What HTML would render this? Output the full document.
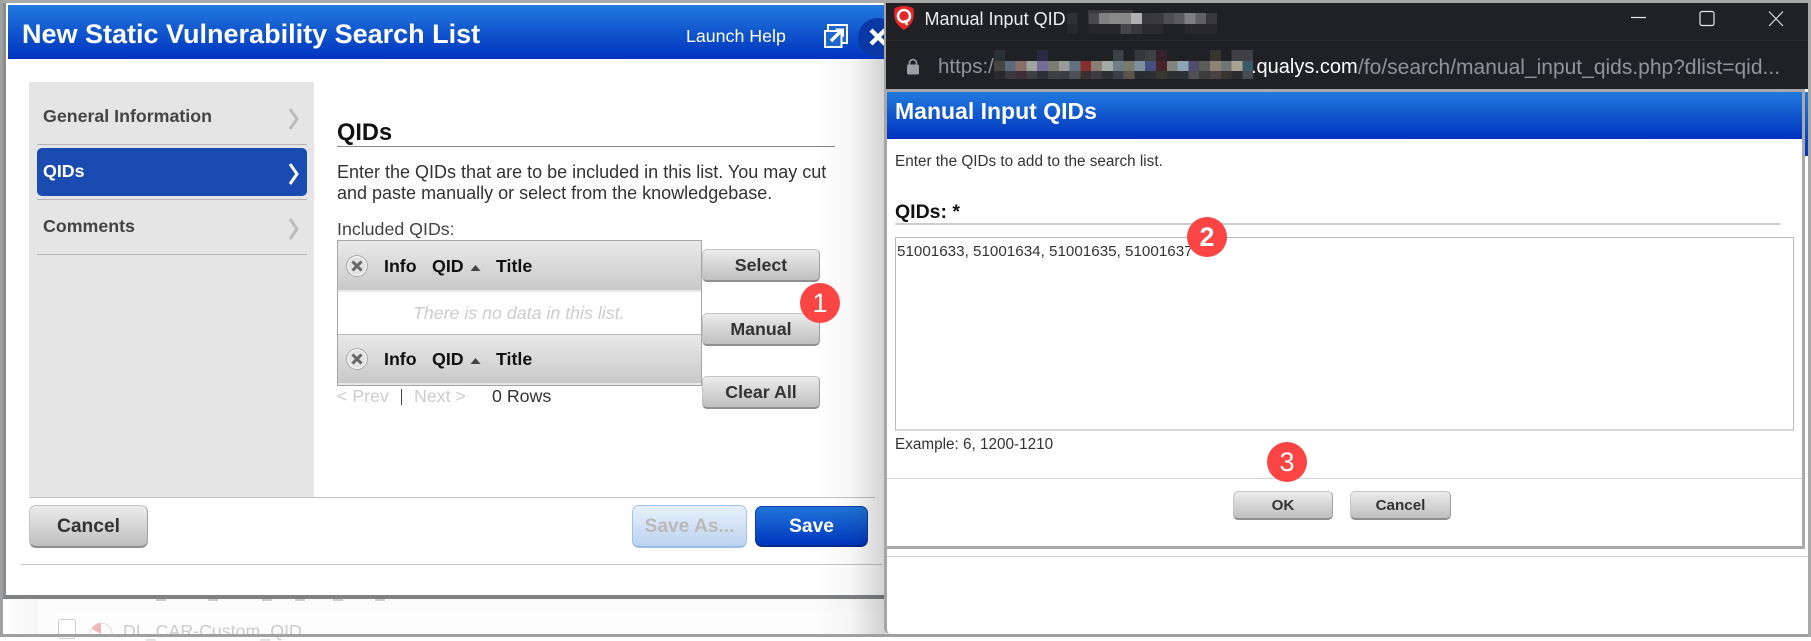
<!DOCTYPE html>
<html><head><meta charset="utf-8"><title>Manual Input QIDs</title>
<style>
html,body{margin:0;padding:0;width:1811px;height:637px;overflow:hidden;background:#fff;font-family:"Liberation Sans",Arial,sans-serif}
div,span{box-sizing:border-box}
.a{position:absolute}
.t{position:absolute;white-space:nowrap;line-height:1}
.b{font-weight:bold}
.btn{position:absolute;background:linear-gradient(#ececec,#bfbfbf);border:1px solid #c4c4c4;border-bottom:2px solid #8f8f8f;border-right-color:#a0a0a0;border-radius:5px;color:#333;font-weight:bold;font-size:17.8px;display:flex;align-items:center;justify-content:center;line-height:1;padding-top:2px}
.thead{position:absolute;left:338px;width:363px;background:linear-gradient(#e9e9e9,#c9c9c9)}
.badge{position:absolute;width:40px;height:40px;border-radius:50%;background:#fb4444;color:#fff;font-size:27px;display:flex;align-items:center;justify-content:center;line-height:1}
</style></head><body>

<!-- back page under modal -->
<div class="a" style="left:0;top:599px;width:886px;height:38px;background:#fbfbfb"></div>
<div class="a" style="left:3px;top:599px;width:35px;height:38px;background:linear-gradient(90deg,#fff,#f6f6f6)"></div>
<div class="a" style="left:53px;top:609px;width:833px;height:28px;background:#fdfdfd"></div>
<div class="a" style="left:58px;top:619px;width:18px;height:20px;border:1px solid #ccc;border-radius:3px;background:#fff"></div>
<svg class="a" style="left:88px;top:621px" width="26" height="16"><circle cx="13" cy="13" r="11" fill="#fff" stroke="#ddd"/><path d="M13 13V2A11 11 0 0 0 4 8Z" fill="#f5b4b4"/></svg>
<div class="t" style="left:123px;top:623px;font-size:17.8px;color:#ccc">DL_CAR-Custom_QID</div>
<div class="a" style="left:156px;top:599px;width:10px;height:2px;background:#ccc"></div>
<div class="a" style="left:208px;top:599px;width:10px;height:2px;background:#ccc"></div>
<div class="a" style="left:262px;top:599px;width:10px;height:2px;background:#ccc"></div>
<div class="a" style="left:295px;top:599px;width:10px;height:2px;background:#ccc"></div>
<div class="a" style="left:333px;top:599px;width:10px;height:2px;background:#ccc"></div>
<div class="a" style="left:375px;top:599px;width:10px;height:2px;background:#ccc"></div>

<!-- modal -->
<div class="a" style="left:3px;top:3px;width:883px;height:596px;background:#fff;border-left:3px solid #8a8d90;border-bottom:4px solid #7f8285"></div>
<div class="a" style="left:8px;top:5px;width:878px;height:54px;background:linear-gradient(#2279dd,#0033bf)"></div>
<div class="t b" style="left:22px;top:21px;font-size:27px;color:#fff">New Static Vulnerability Search List</div>
<div class="t" style="left:686px;top:28px;font-size:17.8px;color:#fff">Launch Help</div>
<svg class="a" style="left:824px;top:24px" width="24" height="24" viewBox="0 0 24 24"><rect x="4" y="1" width="19" height="18" fill="#1d66cf" stroke="#fff" stroke-width="2"/><rect x="1" y="7" width="16.5" height="16" fill="#1d66cf" stroke="#fff" stroke-width="2"/><path d="M7 17L16 8" stroke="#fff" stroke-width="3.4" fill="none"/><path d="M11 4.5H20V13.5Z" fill="#fff"/></svg>
<div class="a" style="left:858px;top:18px;width:40px;height:39px;border-radius:50%;background:#0a39a6"></div>
<svg class="a" style="left:869px;top:28px" width="18" height="18"><path d="M2 2L16 16M16 2L2 16" stroke="#fff" stroke-width="4.4" fill="none"/></svg>

<!-- sidebar -->
<div class="a" style="left:29px;top:82px;width:285px;height:415px;background:#e5e5e5"></div>
<div class="t b" style="left:43px;top:108px;font-size:17.8px;color:#444">General Information</div>
<div class="a" style="left:37px;top:144px;width:270px;height:1px;background:#b5b5b5"></div>
<div class="a" style="left:37px;top:148px;width:270px;height:48px;background:#1a4bb0;border-radius:5px"></div>
<div class="t b" style="left:43px;top:163px;font-size:17.8px;color:#fff">QIDs</div>
<div class="a" style="left:37px;top:199px;width:270px;height:1px;background:#b5b5b5"></div>
<div class="t b" style="left:43px;top:218px;font-size:17.8px;color:#444">Comments</div>
<div class="a" style="left:37px;top:254px;width:270px;height:1px;background:#b5b5b5"></div>
<svg class="a" style="left:287px;top:107px" width="14" height="24"><path d="M3 2L10 12L3 22" fill="none" stroke="#bcbcbc" stroke-width="3"/></svg>
<svg class="a" style="left:287px;top:162px" width="14" height="24"><path d="M3 2L10 12L3 22" fill="none" stroke="#fff" stroke-width="3"/></svg>
<svg class="a" style="left:287px;top:217px" width="14" height="24"><path d="M3 2L10 12L3 22" fill="none" stroke="#bcbcbc" stroke-width="3"/></svg>

<!-- main -->
<div class="t b" style="left:337px;top:122px;font-size:23.6px;color:#111">QIDs</div>
<div class="a" style="left:337px;top:146px;width:498px;height:1px;background:#888"></div>
<div class="t" style="left:337px;top:163px;font-size:18px;color:#333">Enter the QIDs that are to be included in this list. You may cut</div>
<div class="t" style="left:337px;top:184px;font-size:18px;color:#333">and paste manually or select from the knowledgebase.</div>
<div class="t" style="left:337px;top:221px;font-size:17.8px;color:#444">Included QIDs:</div>

<div class="a" style="left:337px;top:240px;width:365px;height:146px;border:1px solid #a5a5a5;background:#fff"></div>
<div class="thead" style="top:241px;height:49px"></div>
<div class="a" style="left:338px;top:290px;width:363px;height:2px;background:#e8e8e8"></div>
<div class="a" style="left:338px;top:334px;width:363px;height:1px;background:#bdbdbd"></div>
<div class="thead" style="top:335px;height:48px"></div>
<div class="a" style="left:338px;top:383px;width:363px;height:2px;background:#e8e8e8"></div>

<svg class="a" style="left:346px;top:255px" width="22" height="22"><circle cx="11" cy="11" r="9.6" fill="#e2e2e2" stroke="#f6f6f6" stroke-width="1.8"/><circle cx="11" cy="11" r="10.4" fill="none" stroke="#999" stroke-width=".8"/><path d="M6.5 6.5L15.5 15.5M15.5 6.5L6.5 15.5" stroke="#666" stroke-width="3"/></svg>
<div class="t b" style="left:384px;top:258px;font-size:17.8px;color:#111">Info</div>
<div class="t b" style="left:432px;top:258px;font-size:17.8px;color:#111">QID</div>
<svg class="a" style="left:470px;top:265px" width="11" height="6"><path d="M5.5 0L10.5 6H.5Z" fill="#444"/></svg>
<div class="t b" style="left:496px;top:258px;font-size:17.8px;color:#111">Title</div>
<div class="t" style="left:413px;top:305px;font-size:17.8px;font-style:italic;color:#ccc">There is no data in this list.</div>
<svg class="a" style="left:346px;top:348px" width="22" height="22"><circle cx="11" cy="11" r="9.6" fill="#e2e2e2" stroke="#f6f6f6" stroke-width="1.8"/><circle cx="11" cy="11" r="10.4" fill="none" stroke="#999" stroke-width=".8"/><path d="M6.5 6.5L15.5 15.5M15.5 6.5L6.5 15.5" stroke="#666" stroke-width="3"/></svg>
<div class="t b" style="left:384px;top:351px;font-size:17.8px;color:#111">Info</div>
<div class="t b" style="left:432px;top:351px;font-size:17.8px;color:#111">QID</div>
<svg class="a" style="left:470px;top:358px" width="11" height="6"><path d="M5.5 0L10.5 6H.5Z" fill="#444"/></svg>
<div class="t b" style="left:496px;top:351px;font-size:17.8px;color:#111">Title</div>

<div class="t" style="left:337px;top:388px;font-size:17.8px;color:#ccc">&lt; Prev</div>
<div class="a" style="left:401px;top:389px;width:1px;height:16px;background:#444"></div>
<div class="t" style="left:414px;top:388px;font-size:17.8px;color:#ccc">Next &gt;</div>
<div class="t" style="left:492px;top:388px;font-size:17.8px;color:#333">0 Rows</div>

<div class="btn" style="left:702px;top:249px;width:118px;height:33px">Select</div>
<div class="btn" style="left:702px;top:313px;width:118px;height:33px">Manual</div>
<div class="btn" style="left:702px;top:376px;width:118px;height:33px">Clear All</div>

<!-- footer -->
<div class="a" style="left:29px;top:497px;width:846px;height:1px;background:#c4c4c4"></div>
<div class="btn" style="left:29px;top:505px;width:119px;height:43px;font-size:19.2px;border-radius:7px">Cancel</div>
<div class="btn" style="left:632px;top:505px;width:115px;height:43px;font-size:19.2px;border-radius:7px;background:linear-gradient(#e8f1fc,#bcd3ef);border:1px solid #a3c3ea;border-bottom:2px solid #9cbde6;color:#b9b9b9">Save As...</div>
<div class="btn" style="left:755px;top:506px;width:113px;height:41px;font-size:19.2px;border-radius:7px;background:linear-gradient(#2175d9,#0036bf);border:1px solid #0b3ea8;border-bottom:2px solid #062c8c;color:#fff">Save</div>
<div class="a" style="left:21px;top:564px;width:861px;height:1px;background:#c4c4c4"></div>

<!-- shadow -->
<div class="a" style="left:815px;top:59px;width:71px;height:578px;background:linear-gradient(90deg,rgba(0,0,0,0),rgba(0,0,0,.03) 50%,rgba(0,0,0,.18))"></div>

<!-- chrome frame -->
<div class="a" style="left:0;top:0;width:1811px;height:3px;background:#a8a8a8"></div>
<div class="a" style="left:0;top:0;width:3px;height:637px;background:#a0a0a0"></div>
<div class="a" style="left:0;top:634px;width:1811px;height:3px;background:#a0a0a0"></div>
<div class="a" style="left:1808px;top:0;width:3px;height:637px;background:#a8a8a8"></div>

<!-- popup window -->
<div class="a" style="left:884px;top:3px;width:924px;height:631px;background:#fff;border-left:3px solid #a5a5a5;border-radius:0 0 0 6px"></div>
<div class="a" style="left:886px;top:3px;width:922px;height:86px;background:#202124"></div>
<div class="a" style="left:886px;top:40px;width:922px;height:1px;background:#2a2b2e"></div>
<svg class="a" style="left:893px;top:5px" width="22" height="26" viewBox="0 0 22 26"><path d="M11 1C7 1 4 2 1.5 3.5C1 9 1 14 3.5 18C5.5 21 8 23 11 25C14 23 16.5 21 18.5 18C21 14 21 9 20.5 3.5C18 2 15 1 11 1Z" fill="#e8262a"/><circle cx="11" cy="11" r="6" fill="none" stroke="#fff" stroke-width="2.6"/><path d="M12 15L14 20" stroke="#fff" stroke-width="2.4"/></svg>
<div class="t" style="left:924.5px;top:10px;font-size:18px;color:#eee;width:143px;overflow:hidden">Manual Input QID:</div>

<svg class="a" style="left:1067px;top:10px" width="150" height="26" shape-rendering="crispEdges">
<rect x="21" y="0" width="45" height="3" fill="#3a3a3c"/>
<g transform="translate(0,3)">
<rect x="0" width="10.7" height="11" fill="#303034"/><rect x="21.4" width="10.7" height="11" fill="#4a4a4c"/><rect x="32.1" width="10.7" height="11" fill="#808080"/><rect x="42.8" width="10.7" height="11" fill="#8a8a8a"/><rect x="53.5" width="10.7" height="11" fill="#888"/><rect x="64.2" width="10.7" height="11" fill="#b0b0b0"/><rect x="74.9" width="10.7" height="11" fill="#38383a"/><rect x="85.6" width="10.7" height="11" fill="#3a3a3c"/><rect x="96.3" width="10.7" height="11" fill="#4e4e50"/><rect x="107" width="10.7" height="11" fill="#5a5a5c"/><rect x="117.7" width="10.7" height="11" fill="#808082"/><rect x="128.4" width="10.7" height="11" fill="#606062"/><rect x="139.1" width="10.7" height="11" fill="#38383a"/>
<rect x="0" y="11" width="10.7" height="10" fill="#28282a"/><rect x="21.4" y="11" width="32" height="10" fill="#26262a"/><rect x="53.5" y="11" width="10.7" height="10" fill="#46464a"/><rect x="64.2" y="11" width="10.7" height="10" fill="#38383c"/><rect x="74.9" y="11" width="21.4" height="10" fill="#2a2a2c"/><rect x="117.7" y="11" width="32" height="10" fill="#28282a"/>
</g></svg>

<!-- window controls -->
<svg class="a" style="left:1628px;top:8px" width="160" height="22" fill="none" stroke="#e8e8e8">
<path d="M3 9.5H18" stroke-width="1.2"/>
<rect x="72" y="3.5" width="14" height="14" rx="2" stroke-width="1.2"/>
<path d="M141 3.5L155 18M155 3.5L141 18" stroke-width="1.1"/>
</svg>

<!-- lock and url -->
<svg class="a" style="left:906px;top:58px" width="14" height="17"><path d="M3.5 7V5a3.5 3.5 0 0 1 7 0V7" fill="none" stroke="#9aa0a6" stroke-width="1.6"/><rect x="1" y="6.5" width="12" height="10" rx="1.5" fill="#9aa0a6"/></svg>
<div class="t" style="left:938px;top:57px;font-size:20.5px;color:#8f959b">https:/</div>
<div class="t" style="left:1251px;top:57px;font-size:20px;color:#fff">.qualys.com</div>
<div class="t" style="left:1358px;top:57px;font-size:21px;color:#8f959b">/fo/search/manual_input_qids.php?dlist=qid...</div>

<svg class="a" style="left:994px;top:50px" width="260" height="29" shape-rendering="crispEdges">
<rect x="0" y="0" width="10.8" height="11" fill="#2a3238"/><rect x="43" y="0" width="10.8" height="11" fill="#2c2a42"/><rect x="118.8" y="0" width="10.8" height="11" fill="#3a4245"/><rect x="140.4" y="0" width="10.8" height="11" fill="#36373b"/><rect x="151.2" y="0" width="10.8" height="11" fill="#404042"/><rect x="162" y="0" width="10.8" height="11" fill="#33222a"/><rect x="216" y="0" width="10.8" height="11" fill="#38342f"/><rect x="237.6" y="0" width="21.6" height="11" fill="#404046"/>
<g transform="translate(0,11)">
<rect x="0" width="10.8" height="10" fill="#454543"/><rect x="10.8" width="10.8" height="10" fill="#5c6b7c"/><rect x="21.6" width="10.8" height="10" fill="#87706a"/><rect x="32.4" width="10.8" height="10" fill="#9ea5a0"/><rect x="43.2" width="10.8" height="10" fill="#776d98"/><rect x="54" width="10.8" height="10" fill="#7a7d74"/><rect x="64.8" width="10.8" height="10" fill="#999b96"/><rect x="75.6" width="10.8" height="10" fill="#60717f"/><rect x="86.4" width="10.8" height="10" fill="#862d30"/><rect x="97.2" width="10.8" height="10" fill="#8a7f76"/><rect x="108" width="10.8" height="10" fill="#a5aaa5"/><rect x="118.8" width="10.8" height="10" fill="#6f7d85"/><rect x="129.6" width="10.8" height="10" fill="#7a7a6c"/><rect x="140.4" width="10.8" height="10" fill="#7d8e9c"/><rect x="151.2" width="10.8" height="10" fill="#444f7e"/><rect x="162" width="10.8" height="10" fill="#472228"/><rect x="172.8" width="10.8" height="10" fill="#80827c"/><rect x="183.6" width="10.8" height="10" fill="#8ba5b5"/><rect x="194.4" width="10.8" height="10" fill="#4f4c6e"/><rect x="205.2" width="10.8" height="10" fill="#5b5c56"/><rect x="216" width="10.8" height="10" fill="#8f8376"/><rect x="226.8" width="10.8" height="10" fill="#6f7776"/><rect x="237.6" width="10.8" height="10" fill="#a8a390"/><rect x="248.4" width="10.8" height="10" fill="#3b5a6a"/>
</g>
<g transform="translate(0,21)">
<rect x="0" width="10.8" height="8" fill="#2a2a2a"/><rect x="10.8" width="10.8" height="8" fill="#3a3a3c"/><rect x="21.6" width="10.8" height="8" fill="#3f2f35"/><rect x="32.4" width="10.8" height="8" fill="#3e3f42"/><rect x="43.2" width="10.8" height="8" fill="#2e2e38"/><rect x="54" width="10.8" height="8" fill="#3e4244"/><rect x="64.8" width="10.8" height="8" fill="#3a3e40"/><rect x="75.6" width="10.8" height="8" fill="#4a5258"/><rect x="86.4" width="10.8" height="8" fill="#3a3034"/><rect x="97.2" width="10.8" height="8" fill="#3c3c3c"/><rect x="108" width="10.8" height="8" fill="#2c3034"/><rect x="118.8" width="10.8" height="8" fill="#3a4048"/><rect x="129.6" width="10.8" height="8" fill="#5a5548"/><rect x="140.4" width="10.8" height="8" fill="#2a2c30"/><rect x="151.2" width="10.8" height="8" fill="#2e2e30"/><rect x="162" width="10.8" height="8" fill="#3a3832"/><rect x="172.8" width="10.8" height="8" fill="#2e3034"/><rect x="183.6" width="10.8" height="8" fill="#2a3238"/><rect x="194.4" width="10.8" height="8" fill="#505054"/><rect x="205.2" width="10.8" height="8" fill="#3c3c3c"/><rect x="216" width="10.8" height="8" fill="#4a4240"/><rect x="226.8" width="10.8" height="8" fill="#38342e"/><rect x="237.6" width="10.8" height="8" fill="#2c2c30"/><rect x="248.4" width="10.8" height="8" fill="#484c52"/>
</g></svg>

<!-- popup content -->
<div class="a" style="left:886px;top:89px;width:919px;height:460px;background:#fff;border:3px solid #a9a9a9;border-left-width:1px"></div>
<div class="a" style="left:887px;top:92px;width:915px;height:47px;background:linear-gradient(#2279dd,#0033bf)"></div>
<div class="a" style="left:1805px;top:92px;width:3px;height:64px;background:linear-gradient(#2279dd,#0033bf)"></div>
<div class="t b" style="left:895px;top:100px;font-size:23px;color:#fff">Manual Input QIDs</div>
<div class="t" style="left:895px;top:154px;font-size:15.3px;color:#333">Enter the QIDs to add to the search list.</div>
<div class="t b" style="left:895px;top:203px;font-size:19.5px;color:#111">QIDs: *</div>
<div class="a" style="left:895px;top:223px;width:885px;height:2px;background:#ccc"></div>
<div class="a" style="left:895px;top:237px;width:899px;height:194px;background:#fff;border:1px solid #bbb;border-bottom:2px solid #d8d8d8"></div>
<div class="t" style="left:897px;top:244px;font-size:15.2px;color:#333">51001633, 51001634, 51001635, 51001637</div>
<div class="t" style="left:895px;top:437px;font-size:15.3px;color:#333">Example: 6, 1200-1210</div>
<div class="a" style="left:887px;top:478px;width:915px;height:1px;background:#d4d4d4"></div>
<div class="btn" style="left:1233px;top:491px;width:100px;height:29px;font-size:15.2px">OK</div>
<div class="btn" style="left:1350px;top:491px;width:101px;height:29px;font-size:15.2px">Cancel</div>
<div class="a" style="left:887px;top:556px;width:921px;height:1px;background:#ccc"></div>

<!-- badges -->
<div class="badge" style="left:800px;top:283px">1</div>
<div class="badge b" style="left:1187px;top:217px">2</div>
<div class="badge" style="left:1267px;top:442px">3</div>

</body></html>
